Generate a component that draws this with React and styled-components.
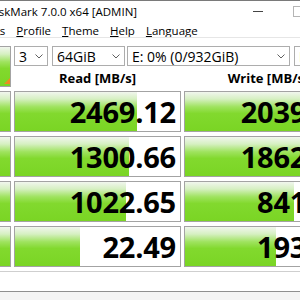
import React from "react";
import styled, { createGlobalStyle } from "styled-components";

const GlobalStyle = createGlobalStyle`
  html, body {
    margin: 0;
    padding: 0;
    overflow: hidden;
    background: #f4f4f4;
  }
  body {
    font-family: "Open Sans", "Noto Sans", sans-serif;
    color: #000;
  }
`;

const Window = styled.div`
  width: 360px;
  background: #fff;
  border-top: 1px solid #7a7a7a;
  display: flex;
  flex-direction: column;
`;

const TitleBar = styled.div`
  height: 21px;
  display: flex;
  align-items: center;
  overflow: hidden;
`;

const TitleText = styled.span`
  margin-left: -49px;
  font-size: 11.5px;
  line-height: 16px;
  white-space: nowrap;
  color: #000;
`;

const Caption = styled.div`
  margin-left: auto;
  display: flex;
`;

const CaptionButton = styled.div`
  width: 41px;
  height: 21px;
  display: flex;
  align-items: center;
  justify-content: center;
`;

const MinGlyph = styled.div`
  width: 10px;
  height: 1px;
  background: #444;
`;

const MaxGlyph = styled.div`
  width: 9px;
  height: 9px;
  border: 1px solid #b5b5b5;
`;

const MenuBar = styled.div`
  height: 15px;
  display: flex;
  align-items: center;
  overflow: hidden;
  border-bottom: 1px solid #e6e6e6;
`;

const MenuStart = styled.div`
  display: flex;
  margin-left: -72px;
`;

const MenuItem = styled.span`
  font-size: 11.5px;
  line-height: 15px;
  padding: 1px 5.5px 0;
  white-space: nowrap;

  & u {
    text-underline-offset: 1px;
  }
`;

const Board = styled.div`
  display: grid;
  grid-template-columns: 100px 167px 168px;
  grid-template-rows: 20px 17px repeat(4, 41px);
  column-gap: 3px;
  row-gap: 4px;
  margin-left: -89px;
  padding-top: 8px;
`;

const Controls = styled.div`
  grid-column: 2 / span 3;
  display: flex;
`;

const Select = styled.div`
  box-sizing: border-box;
  width: ${(p) => p.$w}px;
  margin-left: ${(p) => p.$ml || 0}px;
  flex-shrink: 0;
  height: 20px;
  border: 1px solid #adadad;
  background: #fff;
  display: flex;
  align-items: center;
  padding: 0 4px;
  font-size: 14px;
  white-space: nowrap;
  overflow: hidden;

  & svg {
    margin-left: auto;
    flex-shrink: 0;
  }
`;

const greenFill = `linear-gradient(
  to bottom,
  #f1f6ee 0%,
  #d6f0c2 18%,
  #9fe35f 38%,
  #82d92e 55%,
  #7ad524 100%
)`;

const TestButton = styled.div`
  position: relative;
  box-sizing: border-box;
  grid-row: ${(p) => p.$row} / span ${(p) => p.$span || 1};
  grid-column: 1;
  border: 1px solid #a3a3a3;
  background: ${greenFill};
  color: #fff;
  font-weight: 700;
  font-size: 12px;
  line-height: 14px;
  display: flex;
  align-items: center;
  justify-content: center;
  padding-right: 20px;
  text-align: center;
`;

const Corner = styled.div`
  position: absolute;
  right: 0;
  bottom: 2px;
  width: 0;
  height: 0;
  border-left: 6px solid transparent;
  border-bottom: 6px solid #f08a22;
`;

const Heading = styled.div`
  grid-row: 2;
  grid-column: ${(p) => p.$col};
  font-weight: 700;
  font-size: 13px;
  line-height: 17px;
  text-align: center;
  white-space: nowrap;
`;

const ResultBox = styled.div`
  position: relative;
  box-sizing: border-box;
  grid-row: ${(p) => p.$row};
  grid-column: ${(p) => p.$col};
  border: 1px solid #a3a3a3;
  background: #fff;
  overflow: hidden;
`;

const Bar = styled.div`
  position: absolute;
  left: 0;
  top: 0;
  bottom: 0;
  background: ${greenFill};
`;

const Value = styled.div`
  position: relative;
  text-align: right;
  padding: 1px 4px 0 0;
  font-weight: 700;
  font-size: 29px;
  line-height: 38px;
  letter-spacing: -0.2px;
`;

const Comment = styled.div`
  margin-top: 4px;
  height: 19px;
  border-top: 1px solid #cfcfcf;
  border-bottom: 1px solid #8f8f8f;
  background: #fff;
`;

const tests = [
  { label: ["SEQ1M", "Q8T1"], read: 2469.12, write: 2039.6 },
  { label: ["SEQ1M", "Q1T1"], read: 1300.66, write: 1862.41 },
  { label: ["RND4K", "Q32T16"], read: 1022.65, write: 841.35 },
  { label: ["RND4K", "Q1T1"], read: 22.49, write: 193.87 },
];

// bars follow a log scale, as in the original tool
const barWidth = (v) => Math.max(0, 28 * Math.log10(v) + 27);

const Chevron = () => (
  <svg width="8" height="5" viewBox="0 0 8 5">
    <path d="M0.5 0.5 L4 4 L7.5 0.5" fill="none" stroke="#606060" strokeWidth="1" />
  </svg>
);

const Cell = ({ row, col, value }) => (
  <ResultBox $row={row} $col={col}>
    <Bar style={{ width: barWidth(value) }} />
    <Value>{value.toFixed(2)}</Value>
  </ResultBox>
);

export default function App() {
  return (
    <>
      <GlobalStyle />
      <Window>
        <TitleBar>
          <TitleText>CrystalDiskMark 7.0.0 x64 [ADMIN]</TitleText>
          <Caption>
            <CaptionButton>
              <MinGlyph />
            </CaptionButton>
            <CaptionButton>
              <MaxGlyph />
            </CaptionButton>
            <CaptionButton />
          </Caption>
        </TitleBar>

        <MenuBar>
          <MenuStart>
            <MenuItem><u>F</u>ile</MenuItem>
            <MenuItem><u>S</u>ettings</MenuItem>
            <MenuItem><u>P</u>rofile</MenuItem>
            <MenuItem><u>T</u>heme</MenuItem>
            <MenuItem><u>H</u>elp</MenuItem>
            <MenuItem><u>L</u>anguage</MenuItem>
          </MenuStart>
        </MenuBar>

        <Board>
          <TestButton $row={1} $span={2}>
            All
            <Corner />
          </TestButton>
          <Controls>
            <Select $w={34}>
              3
              <Chevron />
            </Select>
            <Select $w={73} $ml={4}>
              64GiB
              <Chevron />
            </Select>
            <Select $w={163} $ml={2}>
              E: 0% (0/932GiB)
              <Chevron />
            </Select>
            <Select $w={70} $ml={4}>
              MB/s
              <Chevron />
            </Select>
          </Controls>
          <Heading $col={2}>Read [MB/s]</Heading>
          <Heading $col={3}>Write [MB/s]</Heading>

          {tests.map((t, i) => (
            <React.Fragment key={t.label.join("")}>
              <TestButton $row={i + 3}>
                {t.label[0]}
                <br />
                {t.label[1]}
              </TestButton>
              <Cell row={i + 3} col={2} value={t.read} />
              <Cell row={i + 3} col={3} value={t.write} />
            </React.Fragment>
          ))}
        </Board>

        <Comment />
      </Window>
    </>
  );
}
